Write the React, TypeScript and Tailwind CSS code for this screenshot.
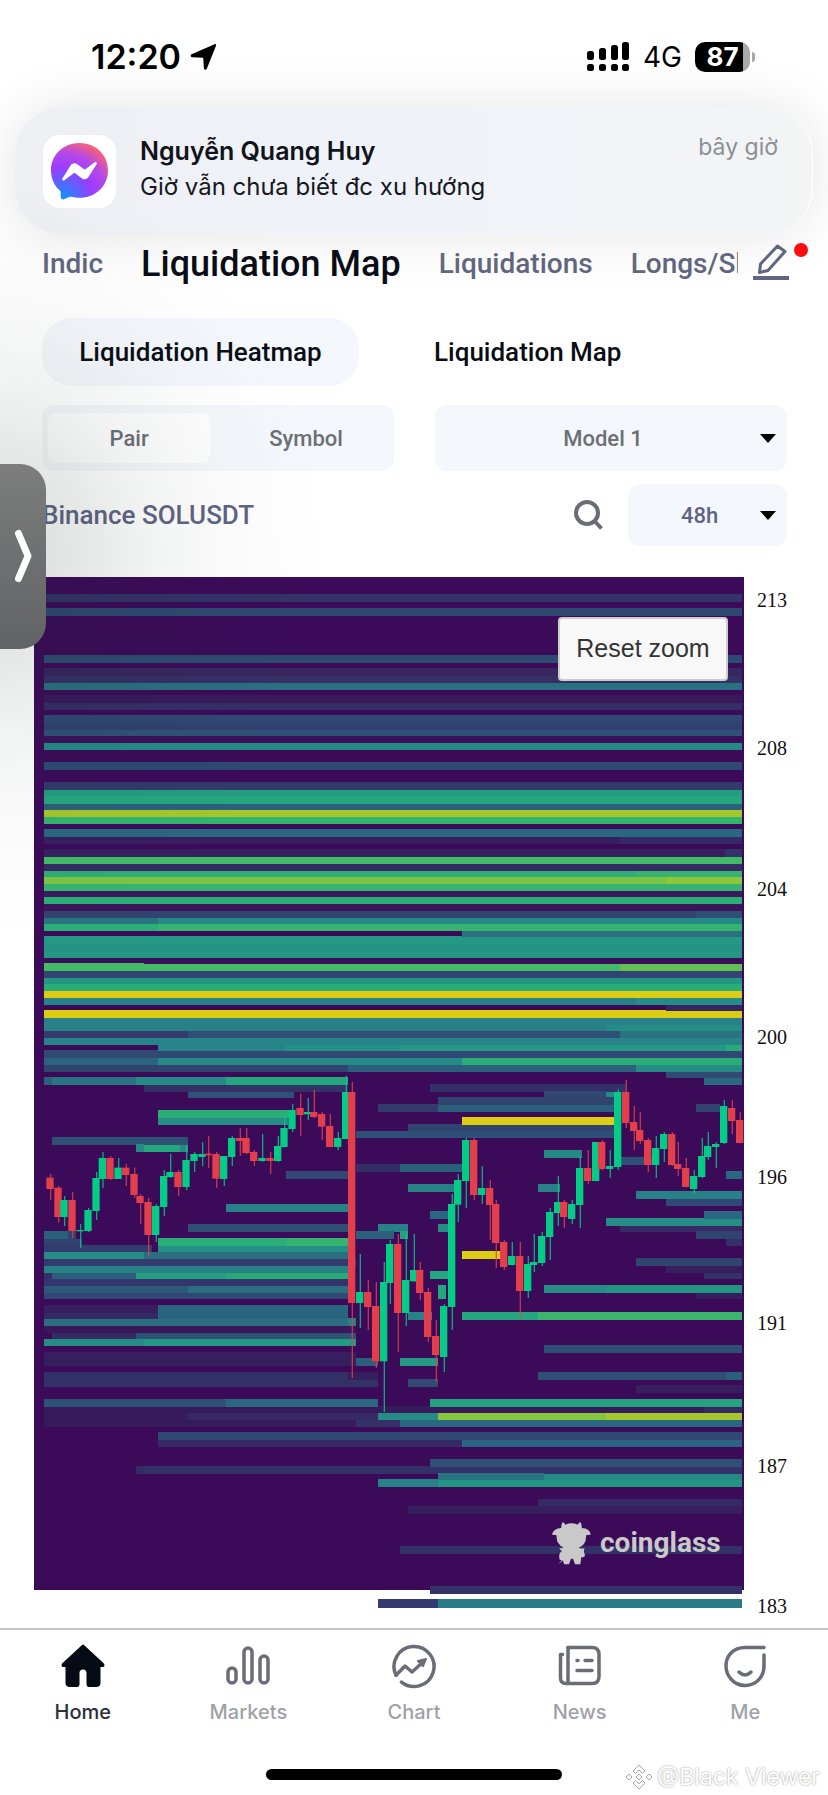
import {ReactNode} from "react";

type Bar = [x1: number, x2: number, y1: number, y2: number, fill: string];
type Candle = [dir: "u" | "d", x: number, high: number, top: number, bottom: number, low: number];

const LEFT = 44;
const RIGHT = 742;

const bars: Bar[] = [
    [LEFT, RIGHT, 594, 602, "#343268"],
    [LEFT, RIGHT, 608, 616, "#2f4870"],
    [LEFT, RIGHT, 655, 663, "#2f4a72"],
    [LEFT, RIGHT, 668, 676, "#37265f"],
    [LEFT, RIGHT, 676, 683, "#353066"],
    [LEFT, RIGHT, 683, 690, "#297080"],
    [LEFT, RIGHT, 695, 703, "#381a5b"],
    [LEFT, RIGHT, 703, 710, "#352e66"],
    [LEFT, RIGHT, 715, 723, "#2f4872"],
    [LEFT, RIGHT, 723, 730, "#314070"],
    [LEFT, RIGHT, 730, 736, "#2e5276"],
    [LEFT, RIGHT, 736, 743, "#3a105a"],
    [LEFT, RIGHT, 743, 750, "#258a86"],
    [LEFT, RIGHT, 762, 770, "#2e4a72"],
    [LEFT, RIGHT, 782, 790, "#323a6c"],
    [LEFT, RIGHT, 790, 796, "#249c80"],
    [LEFT, RIGHT, 796, 804, "#24a67e"],
    [LEFT, RIGHT, 804, 810, "#2b607b"],
    [LEFT, RIGHT, 810, 817, "#a6c62c"],
    [LEFT, RIGHT, 817, 824, "#34b36f"],
    [LEFT, RIGHT, 829, 837, "#2a6780"],
    [LEFT, RIGHT, 837, 844, "#371f5f"],
    [620, RIGHT, 837, 844, "#352a64"],
    [LEFT, RIGHT, 849, 857, "#372060"],
    [725, RIGHT, 849, 857, "#343268"],
    [LEFT, RIGHT, 857, 864, "#42bb66"],
    [LEFT, RIGHT, 864, 871, "#362a64"],
    [LEFT, RIGHT, 871, 877, "#2ead76"],
    [636, RIGHT, 871, 877, "#36b370"],
    [LEFT, RIGHT, 877, 884, "#7bc443"],
    [666, RIGHT, 877, 884, "#8cc63a"],
    [LEFT, RIGHT, 884, 891, "#36b371"],
    [LEFT, RIGHT, 891, 897, "#3a1a5c"],
    [LEFT, RIGHT, 897, 904, "#2dae77"],
    [LEFT, RIGHT, 904, 911, "#3a165a"],
    [LEFT, RIGHT, 911, 918, "#314470"],
    [696, RIGHT, 911, 918, "#2f5076"],
    [LEFT, 158, 918, 924, "#297480"],
    [158, RIGHT, 918, 924, "#258a86"],
    [LEFT, 158, 924, 931, "#2bad78"],
    [158, RIGHT, 924, 931, "#37b370"],
    [LEFT, RIGHT, 936, 958, "#249885"],
    [LEFT, RIGHT, 944, 951, "#239283"],
    [462, RIGHT, 931, 937, "#2a7080"],
    [LEFT, RIGHT, 958, 964, "#3a0f5a"],
    [LEFT, 144, 963, 971, "#43bb66"],
    [144, RIGHT, 964, 971, "#43bb66"],
    [620, RIGHT, 964, 971, "#62c152"],
    [LEFT, RIGHT, 971, 978, "#314472"],
    [LEFT, RIGHT, 978, 984, "#259584"],
    [LEFT, RIGHT, 984, 991, "#2bad78"],
    [LEFT, RIGHT, 991, 998, "#dccd14"],
    [LEFT, RIGHT, 998, 1005, "#278186"],
    [636, RIGHT, 998, 1005, "#258d86"],
    [LEFT, RIGHT, 1010, 1018, "#dccd14"],
    [666, RIGHT, 1005, 1011, "#372563"],
    [LEFT, RIGHT, 1018, 1031, "#278186"],
    [606, RIGHT, 1025, 1031, "#258d86"],
    [LEFT, 188, 1031, 1038, "#343a6e"],
    [188, 620, 1031, 1038, "#2f4f75"],
    [620, RIGHT, 1031, 1038, "#297480"],
    [LEFT, RIGHT, 1038, 1045, "#278489"],
    [158, 286, 1045, 1051, "#278489"],
    [286, 400, 1045, 1051, "#259086"],
    [400, RIGHT, 1045, 1051, "#249a84"],
    [726, RIGHT, 1045, 1051, "#28aa78"],
    [LEFT, 158, 1050, 1058, "#304a72"],
    [158, RIGHT, 1051, 1058, "#304873"],
    [LEFT, 158, 1058, 1065, "#2b6480"],
    [158, 462, 1058, 1065, "#258a86"],
    [462, RIGHT, 1058, 1065, "#2bad78"],
    [LEFT, 348, 1065, 1072, "#314470"],
    [348, 636, 1065, 1072, "#2c5f7c"],
    [636, RIGHT, 1065, 1072, "#258d86"],
    [666, RIGHT, 1072, 1078, "#314a72"],
    [704, RIGHT, 1078, 1085, "#2a6780"],

    // left cluster, up to the drop
    [LEFT, 52, 1077, 1085, "#2b607c"],
    [52, 136, 1077, 1085, "#297482"],
    [136, 226, 1077, 1085, "#258a86"],
    [226, 348, 1077, 1085, "#24a67e"],
    [144, 348, 1085, 1092, "#343068"],
    [188, 294, 1092, 1098, "#2e5278"],
    [158, 290, 1110, 1118, "#2bad78"],
    [158, 288, 1118, 1125, "#258d86"],
    [52, 188, 1137, 1145, "#2e5276"],
    [136, 144, 1144, 1152, "#258a86"],
    [144, 180, 1145, 1152, "#24a67e"],
    [180, 188, 1145, 1152, "#258a86"],
    [286, 348, 1171, 1179, "#304873"],
    [226, 348, 1204, 1212, "#278186"],
    [188, 348, 1224, 1232, "#2f4f75"],
    [LEFT, 68, 1231, 1239, "#2b607c"],
    [68, 76, 1231, 1239, "#314470"],
    [LEFT, 82, 1239, 1245, "#314470"],
    [LEFT, 152, 1245, 1252, "#323c6e"],
    [158, 286, 1238, 1246, "#2bad78"],
    [286, 348, 1238, 1246, "#36b371"],
    [158, 348, 1246, 1252, "#25908a"],
    [LEFT, 144, 1252, 1259, "#258d86"],
    [144, 348, 1252, 1259, "#2a6e80"],
    [LEFT, 356, 1259, 1266, "#333a6e"],
    [LEFT, 348, 1266, 1273, "#278186"],
    [LEFT, 52, 1273, 1279, "#343068"],
    [52, 136, 1273, 1279, "#2c5f7c"],
    [136, 226, 1273, 1279, "#24a080"],
    [226, 348, 1273, 1279, "#28aa78"],
    [LEFT, 348, 1279, 1286, "#33366c"],
    [LEFT, 188, 1286, 1293, "#2e5a7a"],
    [188, 348, 1286, 1293, "#2a6e80"],
    [LEFT, 348, 1293, 1299, "#304873"],
    [LEFT, 158, 1305, 1313, "#371f5f"],
    [LEFT, 158, 1313, 1319, "#352a64"],
    [158, 348, 1305, 1319, "#2a6580"],
    [LEFT, 348, 1319, 1326, "#2a6e80"],
    [348, 356, 1318, 1326, "#278186"],
    [LEFT, 356, 1326, 1333, "#3a165a"],
    [52, 136, 1333, 1339, "#352a64"],
    [136, 356, 1333, 1339, "#2e5276"],
    [LEFT, 144, 1339, 1346, "#258d86"],
    [144, 356, 1339, 1346, "#249a84"],
    [LEFT, 356, 1352, 1366, "#371f5f"],
    [LEFT, 348, 1372, 1387, "#343068"],
    [348, 378, 1372, 1380, "#371f5f"],
    [348, 378, 1380, 1387, "#343068"],

    // centre and right, below the dense area
    [430, 626, 1084, 1092, "#343068"],
    [544, 606, 1091, 1098, "#304873"],
    [606, 614, 1092, 1098, "#258d86"],
    [438, 614, 1097, 1105, "#314470"],
    [378, 438, 1104, 1112, "#333a6e"],
    [438, 614, 1105, 1112, "#2c5f7c"],
    [408, 614, 1124, 1132, "#314470"],
    [462, 614, 1117, 1125, "#dccd14"],
    [356, 614, 1131, 1138, "#2f5076"],
    [544, 582, 1150, 1158, "#258a86"],
    [620, 652, 1157, 1165, "#2f4f75"],
    [356, 400, 1164, 1172, "#352e66"],
    [400, 462, 1164, 1172, "#2c5f7c"],
    [408, 456, 1184, 1192, "#278186"],
    [538, 560, 1184, 1192, "#278186"],
    [696, 720, 1104, 1112, "#314470"],
    [726, RIGHT, 1171, 1179, "#2a6780"],
    [636, RIGHT, 1191, 1199, "#278186"],
    [666, RIGHT, 1199, 1206, "#304873"],
    [430, 448, 1211, 1219, "#2a6780"],
    [606, RIGHT, 1218, 1226, "#258d86"],
    [704, RIGHT, 1211, 1219, "#2a6780"],
    [620, RIGHT, 1226, 1232, "#352a64"],
    [696, RIGHT, 1231, 1239, "#314470"],
    [726, RIGHT, 1239, 1246, "#343068"],
    [378, 408, 1224, 1232, "#278186"],
    [438, 448, 1224, 1232, "#258d86"],
    [356, 394, 1231, 1239, "#2c5f7c"],
    [400, 408, 1231, 1239, "#24a080"],
    [462, 500, 1251, 1259, "#dccd14"],
    [636, RIGHT, 1258, 1266, "#314470"],
    [666, RIGHT, 1266, 1273, "#371f5f"],
    [704, RIGHT, 1273, 1279, "#343068"],
    [430, 448, 1271, 1279, "#24a67e"],
    [438, 446, 1285, 1299, "#24a67e"],
    [544, 606, 1285, 1293, "#258d86"],
    [606, RIGHT, 1285, 1293, "#239683"],
    [696, RIGHT, 1293, 1299, "#371f5f"],
    [408, 432, 1312, 1320, "#278186"],
    [462, 538, 1312, 1320, "#24a67e"],
    [538, RIGHT, 1312, 1320, "#3bb46c"],
    [544, RIGHT, 1345, 1353, "#2f4f75"],
    [356, 378, 1358, 1366, "#2c5f7c"],
    [400, 438, 1358, 1366, "#249a84"],
    [538, 726, 1372, 1380, "#2f4f75"],
    [726, RIGHT, 1372, 1380, "#2c5f7c"],
    [408, 438, 1379, 1387, "#314a72"],
    [636, RIGHT, 1385, 1393, "#371f5f"],

    // bottom rows
    [LEFT, RIGHT, 1406, 1413, "#371a5c"],
    [LEFT, 226, 1399, 1407, "#2e5276"],
    [226, 378, 1399, 1407, "#2b6780"],
    [430, RIGHT, 1399, 1407, "#26a280"],
    [704, RIGHT, 1407, 1413, "#352a64"],
    [LEFT, 188, 1413, 1420, "#381b5d"],
    [188, 378, 1413, 1420, "#352a64"],
    [378, 438, 1413, 1420, "#258d86"],
    [438, 606, 1413, 1420, "#86c63c"],
    [606, RIGHT, 1413, 1420, "#a6c62c"],
    [LEFT, 356, 1420, 1427, "#371a5c"],
    [356, 400, 1420, 1427, "#343068"],
    [400, RIGHT, 1420, 1427, "#2a6780"],
    [158, RIGHT, 1432, 1440, "#304873"],
    [158, 462, 1440, 1447, "#352a64"],
    [462, RIGHT, 1440, 1447, "#2b6480"],
    [136, 144, 1466, 1474, "#352a64"],
    [144, RIGHT, 1466, 1474, "#343068"],
    [430, RIGHT, 1459, 1467, "#2f4f75"],
    [438, 544, 1473, 1480, "#297480"],
    [544, RIGHT, 1474, 1480, "#258a86"],
    [378, 438, 1479, 1487, "#278186"],
    [438, RIGHT, 1480, 1487, "#239683"],
    [538, RIGHT, 1499, 1507, "#352a64"],
    [408, RIGHT, 1506, 1514, "#371f5f"],
    [400, RIGHT, 1546, 1554, "#343068"],
    [430, RIGHT, 1586, 1594, "#343269"],
    [378, 438, 1599, 1608, "#333a6e"],
    [438, RIGHT, 1599, 1608, "#297c86"],
];

// three units per chart pixel
const candles: Candle[] = [
    ["d", 150, 342, 353, 387, 420],
    ["d", 174, 378, 383, 471, 487],
    ["u", 192, 408, 420, 471, 498],
    ["d", 216, 396, 420, 513, 534],
    ["u", 240, 492, 510, 514, 564],
    ["u", 264, 444, 450, 513, 516],
    ["u", 288, 336, 354, 453, 480],
    ["u", 307, 276, 294, 357, 384],
    ["d", 330, 288, 294, 357, 360],
    ["u", 354, 294, 323, 357, 357],
    ["d", 377, 312, 323, 345, 378],
    ["d", 402, 323, 342, 405, 414],
    ["d", 420, 402, 408, 429, 492],
    ["d", 444, 414, 426, 525, 588],
    ["u", 467, 432, 438, 525, 546],
    ["u", 491, 330, 348, 441, 468],
    ["u", 510, 282, 336, 351, 354],
    ["d", 534, 330, 336, 381, 408],
    ["u", 558, 256, 300, 381, 390],
    ["u", 582, 276, 282, 303, 336],
    ["u", 606, 246, 282, 291, 318],
    ["d", 624, 228, 281, 286, 324],
    ["d", 648, 276, 282, 356, 384],
    ["u", 671, 288, 288, 357, 378],
    ["u", 695, 228, 234, 291, 318],
    ["d", 719, 204, 234, 243, 288],
    ["d", 738, 204, 234, 279, 282],
    ["d", 761, 270, 276, 303, 318],
    ["u", 786, 222, 294, 303, 305],
    ["d", 810, 276, 294, 303, 342],
    ["u", 833, 228, 258, 303, 306],
    ["u", 852, 168, 204, 261, 262],
    ["u", 876, 132, 150, 207, 216],
    ["d", 900, 101, 144, 165, 228],
    ["u", 923, 114, 156, 163, 180],
    ["d", 941, 90, 156, 171, 174],
    ["d", 965, 156, 162, 200, 240],
    ["d", 989, 162, 198, 261, 262],
    ["u", 1013, 216, 234, 261, 270],
    ["u", 1037, 47, 96, 237, 238],
    ["d", 1055, 66, 96, 729, 954],
    ["u", 1079, 582, 696, 729, 804],
    ["d", 1103, 660, 696, 741, 810],
    ["d", 1127, 666, 738, 904, 924],
    ["u", 1151, 606, 666, 904, 1056],
    ["u", 1169, 540, 552, 669, 732],
    ["d", 1193, 522, 552, 759, 876],
    ["u", 1217, 520, 660, 759, 798],
    ["u", 1241, 522, 630, 664, 666],
    ["d", 1259, 606, 630, 699, 720],
    ["d", 1283, 684, 696, 831, 846],
    ["d", 1307, 780, 828, 885, 966],
    ["u", 1331, 732, 738, 891, 936],
    ["u", 1355, 402, 432, 741, 810],
    ["u", 1373, 342, 360, 434, 486],
    ["u", 1397, 234, 240, 363, 444],
    ["d", 1421, 234, 240, 405, 420],
    ["u", 1445, 318, 384, 405, 432],
    ["d", 1469, 360, 384, 435, 540],
    ["d", 1487, 420, 432, 549, 624],
    ["d", 1511, 540, 546, 621, 630],
    ["u", 1535, 546, 588, 615, 616],
    ["d", 1559, 546, 588, 693, 774],
    ["u", 1583, 588, 612, 693, 714],
    ["u", 1601, 522, 606, 615, 636],
    ["u", 1625, 516, 528, 609, 618],
    ["u", 1649, 444, 456, 531, 600],
    ["u", 1673, 348, 426, 459, 498],
    ["d", 1691, 420, 426, 471, 504],
    ["u", 1715, 420, 432, 477, 492],
    ["u", 1739, 290, 324, 435, 504],
    ["d", 1763, 270, 324, 363, 372],
    ["u", 1787, 246, 246, 363, 364],
    ["d", 1805, 240, 246, 327, 330],
    ["u", 1829, 270, 318, 327, 354],
    ["u", 1853, 88, 96, 321, 330],
    ["d", 1877, 60, 96, 189, 204],
    ["d", 1901, 138, 186, 213, 270],
    ["d", 1919, 156, 210, 243, 252],
    ["d", 1943, 234, 240, 315, 336],
    ["u", 1967, 228, 264, 315, 354],
    ["u", 1991, 216, 222, 267, 306],
    ["d", 2015, 216, 222, 315, 318],
    ["d", 2033, 246, 312, 327, 348],
    ["d", 2057, 294, 324, 381, 382],
    ["u", 2081, 330, 348, 387, 402],
    ["u", 2105, 234, 288, 351, 354],
    ["u", 2123, 216, 258, 291, 300],
    ["u", 2147, 246, 252, 261, 324],
    ["u", 2171, 120, 138, 249, 252],
    ["d", 2195, 120, 144, 183, 222],
    ["d", 2219, 156, 180, 249, 250],
];

const prices: [string, number][] = [
    ["213", 607], ["208", 755], ["204", 896], ["200", 1044],
    ["196", 1184], ["191", 1330], ["187", 1473], ["183", 1613],
];

const StatusBar = () => (
    <div className="flex h-[107px] items-start justify-between pl-[91px] pr-[73px] pt-[37px] text-black">
        <div className="flex items-center gap-2">
            <span className="text-[34px] leading-10 font-semibold">12:20</span>
            <svg width="28" height="28" viewBox="0 0 28 28" aria-hidden="true">
                <path d="M25.500 1.200c1-.4 1.900.4 1.500 1.500L17.800 25.700c-.6 1.500-2.800 1.200-2.900-.4L14.200 14.800 3 14.200c-1.600-.1-1.900-2.300-.4-2.900z"/>
            </svg>
        </div>
        <div className="flex items-center gap-[13px]">
            <svg width="43" height="30" viewBox="0 0 43 30" aria-hidden="true">
                <rect x="0" y="9" width="7" height="9" rx="2.500"/>
                <rect x="12" y="6" width="7" height="12" rx="2.500"/>
                <rect x="24" y="3" width="7" height="15" rx="2.500"/>
                <rect x="35" y="0" width="7" height="18" rx="2.500"/>
                <rect x="0" y="22" width="7" height="7" rx="2.500"/>
                <rect x="12" y="22" width="7" height="7" rx="2.500"/>
                <rect x="24" y="22" width="7" height="7" rx="2.500"/>
                <rect x="35" y="22" width="7" height="7" rx="2.500"/>
            </svg>
            <span className="text-[28px] leading-10">4G</span>
            <div className="flex items-center gap-[2px]">
                <span
                    className="flex h-[30px] w-[55px] items-center justify-center rounded-[10px] bg-linear-to-r from-black from-88% to-[#a9a9ac] to-88% text-[26px] leading-8 font-bold text-white">87</span>
                <span className="h-[10px] w-[3px] rounded-r-full bg-[#a9a9ac]"></span>
            </div>
        </div>
    </div>
);

const MessengerIcon = () => (
    <div className="flex h-[73px] w-[73px] shrink-0 items-center justify-center rounded-[17px] bg-white">
        <svg width="59" height="59" viewBox="0 0 59 59" aria-hidden="true">
            <defs>
                <radialGradient id="bubble" cx="0.19" cy="0.99" r="1.09">
                    <stop offset="0" stopColor="#0a95ff"/>
                    <stop offset="0.5" stopColor="#9b3cff"/>
                    <stop offset="0.75" stopColor="#b548e8"/>
                    <stop offset="1" stopColor="#ff6370"/>
                </radialGradient>
            </defs>
            <path fill="url(#bubble)"
                  d="M29.500 1C13.500 1 1 12.700 1 28.400c0 8.200 3.400 15.300 8.900 20.200.5.400.7 1 .8 1.700l.1 5c.1 1.600 1.700 2.600 3.200 2l5.600-2.500c.5-.2 1-.2 1.500-.1 2.600.7 5.400 1.100 8.400 1.100C45.500 55.800 58 44.100 58 28.400S45.500 1 29.500 1z"/>
            <path fill="#fff"
                  d="M12.400 36.400l8.400-13.300c1.300-2.100 4.200-2.600 6.200-1.100l6.700 5c.6.500 1.400.5 2 0l9-6.800c1.200-.9 2.800.5 2 1.800l-8.400 13.300c-1.300 2.100-4.200 2.600-6.200 1.100l-6.700-5c-.6-.5-1.400-.5-2 0l-9 6.800c-1.200.9-2.800-.5-2-1.800z"/>
        </svg>
    </div>
);

const Notification = () => (
    <div
        className="mx-[15px] flex h-32 items-center rounded-[48px] border-r border-white bg-linear-to-r from-[#eeeff3] via-[#eff3f9] to-[#f3f4f4] pr-[34px] pl-7 shadow-[0_0_54px_rgba(0,0,0,0.11)]">
        <MessengerIcon/>
        <div className="mb-1 ml-6 flex-1">
            <div className="text-[25px] leading-9 font-semibold text-[#10131a]">Nguyễn Quang Huy</div>
            <div className="text-[24px] leading-9 text-[#15181e]">Giờ vẫn chưa biết đc xu hướng</div>
        </div>
        <div className="mb-12 text-[23px] leading-9 text-[#8c8f93]">bây giờ</div>
    </div>
);

const TopTabs = () => (
    <nav
        className="flex h-[66px] items-start pr-5 pl-[42px] pt-1 font-['Roboto',sans-serif] text-[28px] leading-[50px] font-medium text-[#61667f]">
        <div className="flex flex-1 gap-[38px] overflow-hidden whitespace-nowrap">
            <a href="#indic">Indic</a>
            <a href="#liquidation-map" className="text-[36px] text-[#0a0d16]">Liquidation Map</a>
            <a href="#liquidations">Liquidations</a>
            <a href="#longs">Longs/Sh</a>
        </div>
        <button aria-label="Edit tabs" className="relative ml-[15px] h-[40px] w-[55px]">
            <svg width="38" height="38" viewBox="0 0 38 38" fill="none" stroke="#61667f" strokeWidth="3"
                 strokeLinejoin="round" className="mt-1" aria-hidden="true">
                <path strokeWidth="4" d="M0 35h36"/>
                <path d="M24.500 3l7.500 5.500-17 19-8.500 2 1-8.500z"/>
            </svg>
            <span className="absolute top-1 right-0 h-[14px] w-[14px] rounded-full bg-[#ff0a0a]"></span>
        </button>
    </nav>
);

const Caret = () => (
    <span
        className="pointer-events-none absolute top-1/2 right-[11px] -mt-1 border-x-[8px] border-t-[9px] border-x-transparent border-t-black"></span>
);

const Filters = () => (
    <div className="pr-[41px] pl-[42px] font-['Roboto',sans-serif] font-medium">
        <div className="mt-[17px] flex h-[68px] items-center gap-[75px] text-[26px] text-[#0a0d16]">
            <button className="h-full w-[317px] rounded-[30px] bg-[#f4f7fb]">Liquidation Heatmap</button>
            <button>Liquidation Map</button>
        </div>
        <div className="mt-[19px] grid grid-cols-2 gap-[41px] text-[22px] text-[#6b6f76]">
            <div className="grid h-[66px] grid-cols-[12fr_13fr] items-center gap-2 rounded-xl bg-[#f4f7fb] pl-[6px]">
                <button className="h-[50px] rounded-lg bg-[#fefefe]">Pair</button>
                <button>Symbol</button>
            </div>
            <div className="relative">
                <select aria-label="Model"
                        className="h-[66px] w-full appearance-none rounded-xl bg-[#f4f7fb] pr-4 text-center">
                    <option>Model 1</option>
                </select>
                <Caret/>
            </div>
        </div>
        <div className="mt-[13px] flex h-[62px] items-center">
            <div className="flex-1 text-[26px] text-[#5f6484]">Binance SOLUSDT</div>
            <button aria-label="Search">
                <svg width="32" height="32" viewBox="0 0 32 32" fill="none" stroke="#696d75" strokeWidth="4"
                     aria-hidden="true">
                    <circle cx="15" cy="14" r="11"/>
                    <path d="M22.500 22l7 7.500"/>
                </svg>
            </button>
            <div className="relative ml-6">
                <select aria-label="Period"
                        className="h-[62px] w-[159px] appearance-none rounded-xl bg-[#f4f7fb] pr-4 text-center text-[22px] text-[#5f6484]">
                    <option>48h</option>
                </select>
                <Caret/>
            </div>
        </div>
    </div>
);

const Heatmap = () => (
    <div className="relative mt-[31px] ml-[34px]">
        <svg viewBox="34 577 794 1051" className="block w-full" role="img" aria-label="Liquidation heatmap">
            <rect x="34" y="577" width="710" height="1013" fill="#3b0b59"/>
            <g shapeRendering="crispEdges">
                {bars.map(([x1, x2, y1, y2, fill], i) => (
                    <rect key={i} x={x1} y={y1} width={x2 - x1} height={y2 - y1} fill={fill}/>
                ))}
            </g>
            <g transform="translate(0 1060) scale(0.33333)">
                {candles.map(([dir, x, high, top, bottom, low]) => (
                    <g key={x} fill={dir === "u" ? "#04cb86" : "#e23e4b"}>
                        <rect x={x} y={high} width="4" height={low - high} opacity="0.8"/>
                        <rect x={x - 11} y={top} width="22" height={bottom - top}/>
                    </g>
                ))}
            </g>
            <g fontFamily="Liberation Serif, serif" fontSize="20" fill="#111">
                {prices.map(([price, y]) => <text key={price} x="757" y={y}>{price}</text>)}
            </g>
            <g fill="#c9c9c9">
                <path transform="translate(410 1320) scale(0.33333)"
                      d="M458 606q5 2 8 8 19-8 37 0 3-6 8-8 5 8 4 18 24 0 27 20l-12 1q-2 1-2 8 0 20-22 30 9 4 18 2-4 8-1 14 6 16-9 12l-3 22h-16l-6-17h-6l-6 17h-14q-3-4-4-12l-14 12 10-12-6-2q-5-20 8-26-7-2-9-9 9 2 12-2-20-10-20-29 0-7-2-8l-12-1q5-20 28-20-1-10 4-18z"/>
                <text x="600" y="1552" fontFamily="Roboto, sans-serif" fontSize="28" fontWeight="700">coinglass
                </text>
            </g>
        </svg>
        <button
            className="absolute top-10 right-[100px] h-16 w-[170px] rounded-[4px] border-2 border-[#ccc] bg-[#f8f8f8] font-['Liberation_Sans',sans-serif] text-[25px] text-[#333]">
            Reset zoom
        </button>
    </div>
);

const NavItem = ({label, active, children}: { label: string, active?: boolean, children: ReactNode }) => (
    <a href={`#${label.toLowerCase()}`} className="flex flex-1 flex-col items-center">
        <svg width="48" height="48" viewBox="0 0 48 48" fill="none" stroke="#6a6d76" strokeWidth="3.500"
             strokeLinecap="round" strokeLinejoin="round" aria-hidden="true">{children}</svg>
        <span
            className={`mt-[9px] text-[20px] leading-7 font-medium ${active ? "text-[#2a2e37]" : "text-[#a0a1a6]"}`}>{label}</span>
    </a>
);

const BottomNav = () => (
    <nav className="flex h-[167px] border-t-2 border-[#c4c4c4] bg-white pt-[11px]">
        <NavItem label="Home" active>
            <path fill="#070b15" stroke="#070b15" strokeWidth="2"
                  d="M24 4.500L44 23q1 1.500 0 2h-3.500v17q0 3-3.500 3H30q-1.500 0-1.500-2V32q0-4.500-4.500-4.500T19.500 32v11q0 2-1.500 2h-7q-3.500 0-3.500-3V25H4q-1-.5 0-2z"/>
        </NavItem>
        <NavItem label="Markets">
            <rect x="4" y="27" width="8" height="15" rx="4"/>
            <rect x="20" y="7" width="8" height="35" rx="4"/>
            <rect x="36" y="15" width="8" height="27" rx="4"/>
        </NavItem>
        <NavItem label="Chart">
            <path d="M6 34.200A20 20 0 1 1 11.500 41.100"/>
            <path d="M6 34.200L15 25l7 6 10-9"/>
            <path fill="#6a6d76" strokeWidth="2" d="M28 20l8-2-3 7z"/>
        </NavItem>
        <NavItem label="News">
            <path d="M12 6.500h24q7 0 7 7v22q0 7-7 7H10q-5.500 0-5.500-5.500V13.500h2"/>
            <path d="M12 6.500V42"/>
            <path d="M21 19.500h1M29 19.500h7M21 29.500h15"/>
        </NavItem>
        <NavItem label="Me">
            <path d="M43 6.500H24C12 6.500 5 15 5 25s8 19.500 19 19.500S43 36 43 25V14"/>
            <path d="M18 31q6 6 12 0"/>
        </NavItem>
    </nav>
);

const Watermark = () => (
    <div
        className="absolute right-2 bottom-1 flex items-center gap-1 text-[23px] leading-7 text-white [text-shadow:0_0_2px_#888]">
        <svg width="28" height="28" viewBox="0 0 28 28" fill="none" stroke="#a8a8a8" strokeWidth="1" aria-hidden="true">
            <path d="M8 8l6-6 6 6-2.500 2.500L14 7l-3.500 3.500zM1 14l3-3 3 3-3 3zM21 14l3-3 3 3-3 3zM11 14l3-3 3 3-3 3zM8 20l2.500-2.500L14 21l3.500-3.500L20 20l-6 6z"/>
        </svg>
        <span>@Black Viewer</span>
    </div>
);

const SideHandle = () => (
    <div className="pointer-events-none absolute top-[166px] left-0 flex h-[780px] w-[330px] items-center bg-[radial-gradient(ellipse_100%_50%_at_0%_50%,rgba(20,40,30,0.15)_0%,rgba(20,40,30,0.12)_20%,rgba(20,40,30,0.06)_45%,rgba(20,40,30,0.02)_70%,transparent_100%)]">
        <button aria-label="Open panel"
                className="pointer-events-auto flex h-[185px] w-[46px] items-center justify-center rounded-r-[26px] bg-linear-to-b from-[#7c7d7c] to-[#626365]">
            <svg width="20" height="54" viewBox="0 0 20 54" fill="none" stroke="#fff" strokeWidth="7"
                 strokeLinecap="round" strokeLinejoin="round" aria-hidden="true">
                <path d="M5.500 4.500l9.500 22.500-9.500 22.500"/>
            </svg>
        </button>
    </div>
);

const App = () => (
    <div className="relative overflow-hidden bg-white font-['Inter',sans-serif]">
        <StatusBar/>
        <Notification/>
        <TopTabs/>
        <Filters/>
        <Heatmap/>
        <BottomNav/>
        <SideHandle/>
        <div className="absolute bottom-[15px] left-1/2 h-[11px] w-[296px] -translate-x-1/2 rounded-full bg-black"></div>
        <Watermark/>
    </div>
);

export default App;
